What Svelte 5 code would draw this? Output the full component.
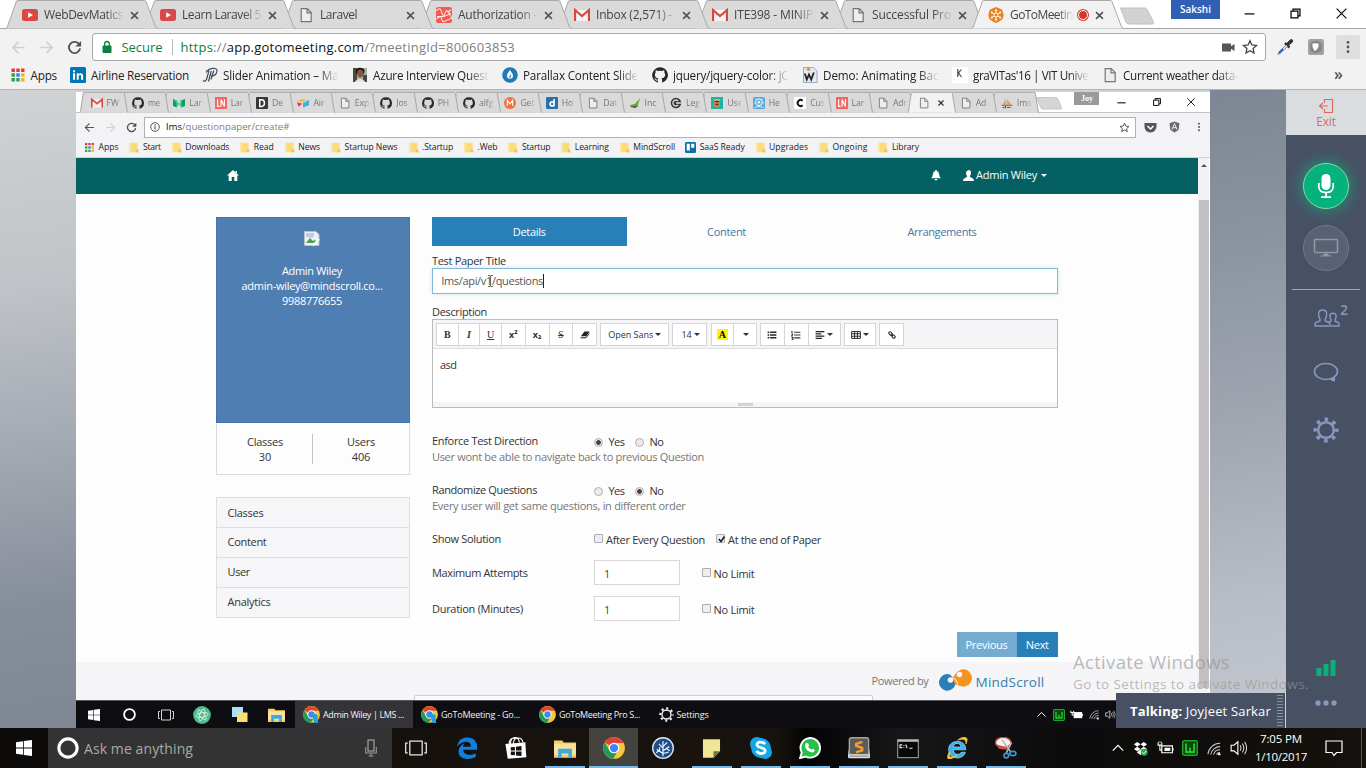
<script>
  // Spreads letters so that a label takes exactly the given width.
  function fit(node, width) {
    const natural = node.getBoundingClientRect().width;
    const count = node.textContent.length;
    if (natural && count) node.style.letterSpacing = (width - natural) / count + 'px';
  }

  const tabs = [
    { icon: 'youtube', text: 'WebDevMatics', w: 79 },
    { icon: 'youtube', text: 'Learn Laravel 5', w: 79 },
    { icon: 'page', text: 'Laravel', w: 37 },
    { icon: 'laravel', text: 'Authorization -', w: 79 },
    { icon: 'gmail', text: 'Inbox (2,571) -', w: 76 },
    { icon: 'gmail', text: 'ITE398 - MINIP', w: 79 },
    { icon: 'page', text: 'Successful Pro', w: 79 },
    { icon: 'goto', text: 'GoToMeetin', w: 63, active: true }
  ];

  const bookmarks = [
    { icon: 'linkedin', text: 'Airline Reservation', w: 98 },
    { icon: 'jp', text: 'Slider Animation – Ma', w: 115.5, cut: true },
    { icon: 'photo', text: 'Azure Interview Quest', w: 115.5, cut: true },
    { icon: 'drop', text: 'Parallax Content Slide', w: 115, cut: true },
    { icon: 'github', text: 'jquery/jquery-color: jC', w: 115.5, cut: true },
    { icon: 'worddoc', text: 'Demo: Animating Bac', w: 115.5, cut: true },
    { icon: 'kicon', text: "graVITas'16 | VIT Unive", w: 115.5, cut: true },
    { icon: 'page', text: 'Current weather data-', w: 115.5, cut: true }
  ];

  const innerTabs = [
    ['gmail', 'FW'], ['github', 'me'], ['medium', 'Lar'], ['ln', 'Lar'], ['dark', 'De'], ['airtable', 'Air'],
    ['page', 'Exp'], ['github', 'Jos'], ['github', 'PH'], ['github', 'alfg'], ['morange', 'Get'], ['dblue', 'Ho'],
    ['page', 'Dat'], ['green', 'Inc'], ['cdark', 'Leg'], ['teal', 'Use'], ['helm', 'He'], ['cwhite', 'Cus'],
    ['ln', 'Lar'], ['page', 'Adr'], ['page', ''], ['page', 'Ad'], ['pma', 'lms']
  ];

  const innerMarks = [
    ['apps', 'Apps', 20], ['note', 'Start', 18], ['note', 'Downloads', 44], ['note', 'Read', 20], ['note', 'News', 22],
    ['note', 'Startup News', 53], ['note', '.Startup', 31], ['note', '.Web', 20], ['note', 'Startup', 28.5], ['note', 'Learning', 34],
    ['note', 'MindScroll', 42], ['trello', 'SaaS Ready', 45], ['note', 'Upgrades', 39], ['note', 'Ongoing', 35], ['note', 'Library', 27]
  ];

  const launchers = [
    { icon: 'edge' }, { icon: 'store' }, { icon: 'folder', open: true }, { icon: 'chrome', open: true, active: true },
    { icon: 'tree' }, { icon: 'sticky', open: true }, { icon: 'skype', open: true }, { icon: 'whatsapp', open: true },
    { icon: 'sublime', open: true }, { icon: 'cmd', open: true }, { icon: 'ie', open: true }, { icon: 'snip', open: true }
  ];
</script>

{#snippet icon(name, size)}
  <svg class="ico" width={size} height={size} viewBox="0 0 16 16">
    {#if name === 'youtube'}
      <rect y="2" width="16" height="12" rx="2.5" fill="#d9494a" /><path d="M6.2 5.2v5.6L11 8z" fill="#fff" />
    {:else if name === 'page'}
      <path d="M3.2 1.6h6l4 4v9h-10zM9 1.8v4h4" fill="#eee" stroke="#777" stroke-width="1.2" />
    {:else if name === 'laravel'}
      <rect width="16" height="16" rx="2" fill="#f3594f" />
      <path d="M0 3.5l4-2 3.5 8 7-2.5-2.2-3 3.2-1M1 9.5l6.500 0 3-6.500 5.500 8-9 4-2.500-5.500L0 12" fill="none" stroke="#fff" stroke-width=".9" />
    {:else if name === 'gmail'}
      <path d="M1 3h14v11H1z" fill="#f4f4f4" /><path d="M1 14V3l7 6 7-6v11" fill="none" stroke="#d8493d" stroke-width="2.2" />
    {:else if name === 'goto'}
      <path d="M8 0l3 1.200 3.200 1.600 1 3.200.500 3-1.600 3.400-3 2.200L8 16l-3.200-1.400-3-2L.300 9l.500-3.200 1-3L5 1.300z" fill="#e98322" />
      <g stroke="#fff" stroke-width=".9"><path d="M8 3v10M3.600 5.500l8.800 5M3.600 10.500l8.800-5" /><circle cx="8" cy="8" r="2" fill="#e98322" /></g>
      <g fill="#fff"><circle cx="8" cy="3.200" r="1" /><circle cx="8" cy="12.800" r="1" /><circle cx="3.800" cy="5.600" r="1" /><circle cx="12.200" cy="5.600" r="1" /><circle cx="3.800" cy="10.400" r="1" /><circle cx="12.200" cy="10.400" r="1" /></g>
    {:else if name === 'apps'}
      <g fill="#e33b2e"><path d="M1.500 1.500h3.400v3.400H1.500zM6.300 1.500h3.400v3.400H6.300zM11.100 1.500h3.400v3.400h-3.400z" /></g>
      <path d="M1.500 6.300h3.400v3.400H1.500z" fill="#2f9e50" /><path d="M6.300 6.300h3.400v3.400H6.300z" fill="#3a78e7" /><path d="M11.100 6.300h3.400v3.400h-3.400z" fill="#f3b50b" />
      <path d="M1.500 11.100h3.400v3.400H1.500zM6.300 11.100h3.400v3.400H6.300z" fill="#2f9e50" /><path d="M11.100 11.100h3.400v3.400h-3.400z" fill="#f3b50b" />
    {:else if name === 'linkedin'}
      <rect width="16" height="16" rx="1.5" fill="#0077b5" /><path d="M3 6.300h2v6.500H3zM3 3.200h2v2H3zM6.700 6.300h1.900v1c1.200-1.900 4.500-1.500 4.500 1.700v3.800h-2V9.300c0-2-2.400-1.700-2.400.1v3.400h-2z" fill="#fff" />
    {:else if name === 'jp'}
      <g fill="none" stroke="#3c4b60" stroke-width="1.200"><path d="M7 3.500L4.800 11.500c-.600 2.500-2.300 3.500-3.800 2M9.300 4L6.500 14.500M4 5.500c2.500-4.500 11.500-6 11-1.500-.400 3.800-3.300 5.200-6 4.800M11.800 3.500L9 12.500M4.500 3.500L7 3.500" /></g>
    {:else if name === 'photo'}
      <path d="M1 1h14v14H1z" fill="#a9b0ac" /><path d="M1 1h4v14H1zM11 8h4v7h-4z" fill="#474840" /><path d="M4 2.500C6 0 11 0 12.500 3l-.5 4H4.500z" fill="#20140f" /><ellipse cx="8.300" cy="6.600" rx="3" ry="4" fill="#8a573f" /><path d="M3 15c1-4 9-4 10 0z" fill="#dce4f0" />
    {:else if name === 'drop'}
      <circle cx="8" cy="8" r="7.800" fill="#1d7cb6" /><path d="M8 3c1.500 2.500 3 3.800 3 5.800a3 3 0 0 1-6 0C5 6.800 6.500 5.500 8 3z" fill="#fff" /><path d="M8.300 7.500v2.700H7" stroke="#1d7cb6" fill="none" />
    {:else if name === 'github'}
      <path fill="#24292e" d="M8 .3a7.800 7.800 0 0 0-2.500 15.200c.4.100.5-.2.500-.4v-1.500c-2.200.5-2.700-.9-2.700-.9-.3-.9-.9-1.200-.9-1.200-.7-.5.1-.5.1-.5.8.1 1.200.8 1.200.8.7 1.200 1.900.9 2.300.7 0-.5.300-.9.500-1.100-1.800-.2-3.600-.9-3.600-3.900 0-.9.300-1.500.8-2.100-.1-.2-.4-1 .1-2.100 0 0 .7-.2 2.200.8a7.500 7.500 0 0 1 4 0c1.500-1 2.200-.8 2.200-.8.400 1.100.100 1.900.1 2.100.5.600.8 1.200.8 2.100 0 3-1.800 3.700-3.600 3.900.3.300.6.800.6 1.500v2.200c0 .2.100.5.500.4A7.800 7.800 0 0 0 8 .3z" />
    {:else if name === 'worddoc'}
      <path d="M1.500 .5h10l3.500 3.500v11.500H1.500z" fill="#e3e9f3" stroke="#8fa3c4" stroke-width=".9" /><circle cx="6.500" cy="2.300" r="1.700" fill="#ee8b39" /><path d="M2.800 6.500l2 6L7 7.500l2.200 5 2.600-7" fill="none" stroke="#222" stroke-width="1.800" />
    {:else if name === 'kicon'}
      <path d="M0 0h16v16H0z" fill="#fff" /><path d="M5.800 2v8M9.300 2.500L6.500 6l3 4" fill="none" stroke="#444" stroke-width="1.200" />
    {:else if name === 'medium'}
      <path d="M0 2.500l5 2V14l-5-2zM11 4.500l5-2v9.500l-5 2z" fill="#0c9f63" /><path d="M0 2.500L5 4.500l6 9.500V9L8 4.500l3 0L5 14V8z" fill="#29d68c" />
    {:else if name === 'ln'}
      <path d="M0 0h16v16H0z" fill="#f2675f" /><path d="M3.500 3v9.500H6M8 13V3.500l4.500 9V3" fill="none" stroke="#fff" stroke-width="1.500" />
    {:else if name === 'dark'}
      <rect width="16" height="16" rx="1" fill="#38383c" /><path d="M5 3.500v9h2.500c5 0 5-9 0-9z" fill="none" stroke="#fff" stroke-width="2" />
    {:else if name === 'airtable'}
      <path d="M0 5l8-2 5 1-7 3z" fill="#f7b62d" /><path d="M0 7l7 2-5 4z" fill="#e23b5c" /><path d="M8 8l8-4v7l-8 3z" fill="#35b4e8" />
    {:else if name === 'morange'}
      <circle cx="8" cy="8" r="8" fill="#f0723c" /><path d="M4.500 11.500v-7L8 9l3.500-4.500v7" fill="none" stroke="#fff" stroke-width="1.500" />
    {:else if name === 'dblue'}
      <rect width="16" height="16" rx="1.500" fill="#2571a8" /><path d="M10.700 2.500v10M10.500 8a2.700 2.700 0 1 0 0 2.500" fill="none" stroke="#fff" stroke-width="2.200" />
    {:else if name === 'green'}
      <path d="M1 11L8 9l7-8-3.500 10.500L8 14H3z" fill="#68ab37" /><path d="M1 12l6 1 6-2-5 3.500z" fill="#333" />
    {:else if name === 'cdark'}
      <circle cx="8" cy="8" r="7" fill="#333438" /><path d="M15 8H8M11 5.500a4 4 0 1 0 0 5" stroke="#dcdcde" stroke-width="1.800" fill="none" />
    {:else if name === 'teal'}
      <path d="M0 0h16v16H0z" fill="#20b2a8" /><path d="M4 3h8v10H4z" fill="#c98b4a" /><path d="M5 5h6v2H5zM6 9h4v2H6z" fill="#553422" /><path d="M4 3l2 2 2-2 2 2 2-2" stroke="#eee" fill="none" />
    {:else if name === 'helm'}
      <rect width="16" height="16" rx="2" fill="#58a9dc" /><circle cx="8" cy="7" r="4.500" fill="none" stroke="#fff" stroke-width="1.300" /><circle cx="8" cy="7" r="1.800" fill="#fff" /><path d="M2 14q6-3 12 0M3 2l2 2M13 2l-2 2M1.500 8H3M13 8h1.500" fill="none" stroke="#fff" />
    {:else if name === 'cwhite'}
      <path d="M0 0h16v16H0z" fill="#fff" /><path d="M11.500 5a4 4 0 1 0 0 6" fill="none" stroke="#111" stroke-width="2.500" />
    {:else if name === 'pma'}
      <path d="M2 10L7 2v8zM8 10V3l6 7z" fill="#f4a337" /><path d="M1 11h14M2 14h3M6 12v3M8 14h5" stroke="#4a5b9b" stroke-width="1.500" />
    {:else if name === 'note'}
      <path d="M2 1h12v14H2z" fill="#fbdc7b" /><path d="M11 11h4v4h-4z" fill="#efc44f" /><path d="M2 1h2v14H2z" fill="#fce7a0" />
    {:else if name === 'trello'}
      <rect width="16" height="16" rx="2" fill="#0b6fa8" /><path d="M2.500 2.500h4.500v10H2.500zM9 2.500h4.500v6H9z" fill="#fff" />
    {:else if name === 'edge'}
      <path d="M.8 7C1.600 2.300 4.600.4 8.300.4c4.500 0 7.100 3 7.100 7.200v1.700H5.200c.2 4.100 5.800 4.600 9.100 2.500v2.800C8.800 17.500.7 15.900 2 9.400 2.500 7 4.500 5.300 6.300 4.800 5.500 5.500 5.200 6.300 5.100 7h5.700C11.200 2 4 2.600.8 7z" fill="#0f7fe0" />
    {:else if name === 'store'}
      <path d="M.3 5l14.500-1.200.7 10.900-13.500 1.100z" fill="#fff" /><path d="M4 5c0-5.500 5.500-6.500 6.500-1M6 5c.5-6 6.500-5 7-1M3 5C3 1 6 0 8 1.500" fill="none" stroke="#fff" stroke-width=".8" /><path d="M4.200 7.500l3-.3v2.600h-3zM8 7.100l4-.500v3.200H8zM4.200 10.600h3v2.700l-3-.3zM8 10.600h4v3.300l-4-.500z" fill="#111" />
    {:else if name === 'folder'}
      <path d="M0 2.500h6l1 1.500h9v11H0z" fill="#f6cd68" /><path d="M0 5h16v8H0z" fill="#fbe29a" /><path d="M3 8.500h10V15h-2.500v-3h-5v3H3z" fill="#38abe2" />
    {:else if name === 'chrome' || name === 'chromeuser'}
      <circle cx="8" cy="8" r="7.900" fill="#f5c938" /><path d="M8 8L1.200 4A7.900 7.900 0 0 1 15 4.400H8z" fill="#dc4437" /><path d="M1.200 4A7.900 7.900 0 0 0 7.500 15.900L11 9.500 8 8 4.700 9.500z" fill="#229a59" /><circle cx="8" cy="8" r="3.900" fill="#fff" /><circle cx="8" cy="8" r="3" fill="#4286f1" />
      {#if name === 'chromeuser'}<circle cx="11.500" cy="10" r="2.400" fill="#269ee6" /><path d="M9.500 11.500l4-1 1 6h-3.500z" fill="#269ee6" />{/if}
    {:else if name === 'tree'}
      <circle cx="8" cy="8" r="7.500" fill="#1e4d88" stroke="#dce6f0" stroke-width="1" /><path d="M8 14V3M8 12L3.500 9M8 10l4.500-3M8 8L5 5M8 7l3-3M5.500 10.300V7.500M10.500 8.500L13 10M5 10l-2 1.500M8 12l4-1" fill="none" stroke="#e7eff7" stroke-width=".9" />
    {:else if name === 'sticky'}
      <path d="M1.500 1h13v9l-5 5h-8z" fill="#f1e596" /><path d="M9.500 15v-5h5z" fill="#77714b" />
    {:else if name === 'skype'}
      <circle cx="5" cy="5" r="5" fill="#16a6e7" /><circle cx="11" cy="11" r="5" fill="#16a6e7" /><circle cx="8" cy="8" r="7.200" fill="#16a6e7" /><path d="M11 5.200C9 2.700 4.500 3.500 5.200 6c.6 2.300 6 1.200 5.800 4.100-.2 2.500-5 2.600-6.200 0" fill="none" stroke="#fff" stroke-width="2" />
    {:else if name === 'whatsapp'}
      <path d="M.8 15.300l1.200-4A7.100 7.100 0 1 1 5 14.200z" fill="#27c04b" stroke="#fff" stroke-width="1.400" /><path d="M5 4.300l1.600.2.700 1.700-.7 1 2.300 2 1.100-.6 1.500 1c-.4 1.900-2.200 1.900-4 1C5.300 9.500 3.400 6.700 5 4.300z" fill="#fff" />
    {:else if name === 'sublime'}
      <rect x="1" y=".5" width="14" height="12.500" rx="1.500" fill="#5b5b58" stroke="#a5a5a0" /><path d="M.5 8L0 12v2.500q0 1 1 1h14q1 0 1-1V12l-.5-4v4.500H.5z" fill="#ddd" /><path d="M1 13.500h14v.8H1z" fill="#888" /><path d="M10.500 3.500L6 5v1.500l4.300 1.500v1.700L5.800 11.200" fill="none" stroke="#f59b31" stroke-width="1.800" />
    {:else if name === 'cmd'}
      <rect x=".5" y="2" width="15" height="13" fill="#080808" stroke="#999" stroke-width=".8" /><path d="M.5 2h15v1.500H.5z" fill="#bbb" /><path d="M3.800 5.700H2.200v2h1.600M5 6v.5M5 7.500v.5M6.300 5.500l1 2.500M9 8.200h2.300" stroke="#eee" fill="none" stroke-width=".8" />
    {:else if name === 'ie'}
      <path d="M14.300 9.300H5.300c.2 4 5 3.900 5.800 1.800h3C12.500 17 2 17 1.900 8.800 2 1.500 14.800 1 14.300 9.300zM5.300 7.300h5.600c-.2-3.500-5.200-3.500-5.600 0z" fill="#33b4ef" stroke="#aae2fa" stroke-width=".5" /><path d="M2.300 11C-1.500 19 5 15.500 8 13.500 3.800 14.800 1.500 15.500 3 12zM8.500 2.200c5-3.500 8.500-2.500 6 2.800C15 1.500 12.500 1 8.500 2.200z" fill="#f4c832" stroke="#f4c832" stroke-width=".6" />
    {:else if name === 'snip'}
      <ellipse cx="6" cy="4" rx="5.700" ry="3.700" fill="#f5f4f2" stroke="#c43b3b" /><path d="M1 5.500l2 3.200 6 .5-1-2z" fill="#d54b42" /><path d="M5 2l6.500 9M12 4L8 12" stroke="#bbb" stroke-width="1.200" /><circle cx="8.200" cy="13.500" r="1.700" fill="none" stroke="#3e96d2" stroke-width="1.200" /><ellipse cx="13" cy="12" rx="2.200" ry="1.500" fill="none" stroke="#3e96d2" stroke-width="1.200" />
    {:else if name === 'win'}
      <path d="M0 2.200l7-1v6.300H0zM7.800 1l8.200-1v7.500H7.800zM0 8.400h7v6.300l-7-1zM7.800 8.400H16V16l-8.200-1.100z" fill="#fff" />
    {:else if name === 'taskview'}
      <path d="M3.500 3h9v10h-9zM2 4.500H.5v7H2M14 4.500h1.500v7H14" fill="none" stroke="#e9e9e9" stroke-width=".9" />
    {:else if name === 'atom'}
      <circle cx="8" cy="8" r="7.900" fill="#4dbb8a" /><g fill="none" stroke="#dff5e9" stroke-width=".7"><ellipse cx="8" cy="8" rx="2" ry="5.500" transform="rotate(20 8 8)" /><ellipse cx="8" cy="8" rx="2" ry="5.500" transform="rotate(80 8 8)" /><ellipse cx="8" cy="8" rx="2" ry="5.500" transform="rotate(140 8 8)" /></g>
    {:else if name === 'squares'}
      <path d="M0 0h11v10H0z" fill="#a9dff7" /><path d="M5 5.500h10.500V15H5z" fill="#fade74" />
    {:else if name === 'gear'}
      <circle cx="8" cy="8" r="4.800" fill="none" stroke="currentColor" stroke-width="1.500" /><circle cx="8" cy="8" r="6.600" fill="none" stroke="currentColor" stroke-width="2.300" stroke-dasharray="2.200 2.984" stroke-dashoffset="1.100" />
    {:else if name === 'wbox'}
      <rect x=".7" y=".7" width="14.600" height="14.600" rx="1.500" fill="#054a0b" stroke="#1fa52b" stroke-width="1.400" /><path d="M4 3.500V12h8V3.500M8 7.500v4" fill="none" stroke="#22c52f" stroke-width="1.900" />
    {:else if name === 'battery'}
      <path d="M4.500 5.500h10v6.500h-10zM15 7.500v2.500" fill="none" stroke="#fff" stroke-width="1.100" /><path d="M7 7.300h5.500v3H7z" fill="#fff" /><path d="M1 2.500v2.300h3.500V2.500M2.700 5v4.500h2M1.800 1.500v1M3.700 1.500v1" stroke="#fff" fill="none" />
    {:else if name === 'batfull'}
      <path d="M4.500 5h10.500v7.500H4.500z" fill="#fff" /><path d="M15 7.500h1v2.500h-1z" fill="#fff" /><path d="M1 3.500v2h3.500v-2M2.700 5.500v3h2" stroke="#fff" stroke-width="1.300" fill="none" />
    {:else if name === 'wifi'}
      <g fill="none" stroke="#ccc" stroke-width="1.100"><path d="M1 14A13 13 0 0 1 14 2.500M4 14.500A10 10 0 0 1 14 6M7 14.500A7 7 0 0 1 14 9.300M10 14.500a4 4 0 0 1 4-2.300" /></g><circle cx="13" cy="14" r="1.300" fill="#fff" />
    {:else if name === 'volume'}
      <path d="M1 5.500h2.500L7 2.500v11l-3.500-3H1z" fill="none" stroke="#fff" /><path d="M9 5.500q1.500 2.500 0 5M11 4q2.500 4 0 8M13 2.500q3.500 5.500 0 11" fill="none" stroke="#ddd" stroke-width=".9" />
    {:else if name === 'chevron'}
      <path d="M2 11l6-6 6 6" fill="none" stroke="#fff" stroke-width="1.400" />
    {:else if name === 'dropbox'}
      <path d="M4.500 1L8 3.500 4.500 6 1 3.500zM11.500 1L15 3.500 11.500 6 8 3.500zM4.500 6L8 8.500 4.500 11 1 8.500zM11.500 6L15 8.500 11.500 11 8 8.500zM4 12l4-3 4 3-4 3z" fill="#fff" /><circle cx="12" cy="12" r="3.700" fill="#2aab4d" /><path d="M10 12l1.500 1.500L14 10.500" fill="none" stroke="#fff" />
    {:else if name === 'star'}
      <path d="M8 1.700l1.900 4.200 4.600.5-3.400 3.100.9 4.500L8 11.700 4 14l.9-4.500L1.500 6.400l4.600-.5z" fill="none" stroke="#444" stroke-width="1.300" />
    {:else if name === 'back'}
      <path d="M14.500 8H2M8 2L2 8l6 6" fill="none" stroke="currentColor" stroke-width="1.700" />
    {:else if name === 'forward'}
      <path d="M1.500 8H14M8 2l6 6-6 6" fill="none" stroke="currentColor" stroke-width="1.700" />
    {:else if name === 'reload'}
      <path d="M13.300 5A6 6 0 1 0 14 9" fill="none" stroke="#505050" stroke-width="2" /><path d="M15 1v6H9z" fill="#505050" />
    {:else if name === 'close'}
      <path d="M3 3l10 10M13 3L3 13" stroke="currentColor" stroke-width="2.400" />
    {:else if name === 'min'}
      <path d="M2 8.500h12" stroke="#000" stroke-width="1.500" />
    {:else if name === 'restore'}
      <path d="M2.500 5h8.500v8.500H2.500zM5 5V2.500h8.500V11H11" fill="none" stroke="#000" stroke-width="1.500" />
    {:else if name === 'shut'}
      <path d="M2 2l12 12M14 2L2 14" stroke="#000" stroke-width="1.400" />
    {:else if name === 'dots'}
      <g fill="#555"><circle cx="8" cy="2.700" r="1.600" /><circle cx="8" cy="8" r="1.600" /><circle cx="8" cy="13.300" r="1.600" /></g>
    {:else if name === 'list'}
      <path d="M1 3.500h2.500M1 8h2.500M1 12.500h2.500M5 3.500h10M5 8h10M5 12.500h10" stroke="#222" stroke-width="2.400" />
    {:else if name === 'olist'}
      <path d="M1.500 1v4M1 7h1.500l-1.500 2.500h2M1 12h2v3H1M5 3.500h10M5 8h10M5 12.500h10" fill="none" stroke="#333" stroke-width="1.800" />
    {:else if name === 'align'}
      <path d="M1 2.500h14M1 6.200h9M1 9.800h14M1 13.500h10" stroke="#222" stroke-width="2" />
    {:else if name === 'table'}
      <path d="M1 2.500h14v11H1zM1 6h14M1 10h14M5.700 2.500v11M10.300 2.500v11" fill="none" stroke="#222" stroke-width="1.500" />
    {:else if name === 'link'}
      <g fill="none" stroke="#222" stroke-width="2" transform="rotate(45 8 8)"><rect x="0" y="5.500" width="7.500" height="5" rx="2.500" /><rect x="8.500" y="5.500" width="7.500" height="5" rx="2.500" /><path d="M5 8h6" /></g>
    {:else if name === 'eraser'}
      <path d="M7 2.500h8.500L10 10H1.500z" fill="#222" /><path d="M1 12.500h8.500l5.500-7" fill="none" stroke="#222" stroke-width="1.600" />
    {/if}
  </svg>
{/snippet}

{#snippet tabShape(active)}
  <svg class="shape" viewBox="0 0 152 29" preserveAspectRatio="none">
    <path d="M0 28.500C1 28 1.500 26 2 25L10.500 1Q11 .5 12 .5H138.500Q139.500 .5 140 1L149 25Q150 28.500 152 28.500" fill={active ? '#f2f2f2' : '#dadada'} stroke="#a9a9a9" vector-effect="non-scaling-stroke" />
  </svg>
{/snippet}

{#snippet ring(size)}
  <svg class="ico" width={size} height={size} viewBox="0 0 20 20"><circle cx="10" cy="10" r="8.300" fill="none" stroke="#fff" stroke-width="2.800" /></svg>
{/snippet}

<div class="screen">
  <header class="browser">
    <div class="strip">
      {#each tabs as t, i}
        <div class="tab" class:active={t.active} style:z-index={t.active ? 20 : 10 - i}>
          {@render tabShape(t.active)}
          <div class="tabin">
            {@render icon(t.icon, 16)}
            <div class="tabtext" class:short={t.active}><span class="t" use:fit={t.w}>{t.text}</span></div>
            {#if t.active}<i class="rec"></i>{/if}
            <span class="x">{@render icon('close', 11)}</span>
          </div>
        </div>
      {/each}
      <svg class="newtab" width="34" height="18" viewBox="0 0 34 18"><path d="M.5 1h24q2 0 3 2l6 12q.5 2-1 2H9q-2 0-3-2z" fill="#d2d2d2" stroke="#c0c0c0" /></svg>
      <div class="profile"><span class="t" use:fit={31}>Sakshi</span></div>
      <div class="wctl">{@render icon('min', 13)}{@render icon('restore', 13)}{@render icon('shut', 13)}</div>
    </div>
    <div class="toolbar">
      <span class="dim">{@render icon('back', 15)}</span>
      <span class="dim">{@render icon('forward', 15)}</span>
      {@render icon('reload', 15)}
      <div class="omni">
        <svg width="10" height="14" viewBox="0 0 10 14"><path d="M1 6h8v6.500H1z" fill="#0b8043" stroke="#0b8043" /><path d="M2.700 6V3.800a2.300 2.300 0 0 1 4.600 0V6" fill="none" stroke="#0b8043" stroke-width="1.300" /></svg>
        <span class="t secure" use:fit={41}>Secure</span>
        <i class="bar"></i>
        <span class="t" use:fit={334.5}><b class="g">https</b><b class="l">://</b>app.gotomeeting.com<b class="l">/?meetingId=800603853</b></span>
        <span class="grow"></span>
        <svg width="13" height="9" viewBox="0 0 13 9"><path d="M0 .5h9v2.700L12.500 1v7L9 5.800v2.700H0z" fill="#555" /></svg>
        {@render icon('star', 16)}
      </div>
      <svg class="picker" width="16" height="16" viewBox="0 0 16 16"><path d="M9.500 5l2-2.500Q14-.5 15.500 1T13 5l-2 2z" fill="#333" stroke="#333" /><path d="M8 4l4.500 4.500" stroke="#333" stroke-width="2.500" /><path d="M9 6L2 13l-1 2.500L3.500 14l7-6.500" fill="#dfe6f4" stroke="#888" /><path d="M6 10l-4 4" stroke="#2f5fd6" stroke-width="2" /></svg>
      <svg class="shield" width="16" height="16" viewBox="0 0 16 16"><rect width="16" height="16" rx="2" fill="#a2a2a2" /><rect x="2" y="2" width="12" height="12" rx="5" fill="#858585" /><path d="M4.500 4.500q3-.3 6 0 .8 4.500-3.500 7.500Q4 9 4.500 4.500z" fill="#fff" /></svg>
      <div class="menu">{@render icon('dots', 14)}</div>
    </div>
    <nav class="marks">
      <div class="mark">{@render icon('apps', 16)}<span class="t" use:fit={26.5}>Apps</span></div>
      {#each bookmarks as b}
        <div class="mark">{@render icon(b.icon, 16)}<div class="mt" class:cut={b.cut}><span class="t" use:fit={b.w}>{b.text}</span></div></div>
      {/each}
      <span class="more">»</span>
    </nav>
  </header>

  <main class="meeting">
    <div class="gutter left"></div>
    <section class="shared">
      <div class="istrip">
        {#each innerTabs as [ic, label], i}
          <div class="itab" style:z-index={i === 20 ? 40 : 30 - i}>
            {@render tabShape(i === 20)}
            <div class="itin">{@render icon(ic, 12)}{#if label}<span class="t">{label}</span>{:else}<span class="ix">{@render icon('close', 8)}</span>{/if}</div>
          </div>
        {/each}
        <svg class="inew" width="26" height="13" viewBox="0 0 26 13"><path d="M.5.5h19q1.500 0 2 1l4 9q.5 1.500-1 1.500H7q-1.500 0-2-1z" fill="#d5d4d6" stroke="#c6c5c7" /></svg>
        <div class="joy">Joy</div>
        <div class="iwctl">{@render icon('min', 11)}{@render icon('restore', 10)}{@render icon('shut', 10)}</div>
      </div>
      <div class="itool">
        <span class="iback">{@render icon('back', 11)}</span><span class="dim">{@render icon('forward', 11)}</span>{@render icon('reload', 11)}
        <div class="iomni">
          <svg width="10" height="10" viewBox="0 0 10 10"><circle cx="5" cy="5" r="4.300" fill="none" stroke="#555" /><path d="M5 4.300v3.200M5 2.300v1.200" stroke="#555" stroke-width="1.200" /></svg>
          <span class="t" use:fit={123.5}>lms<b class="l">/questionpaper/create#</b></span>
          <span class="grow"></span>{@render icon('star', 11)}
        </div>
        <svg class="pocket" width="13" height="11" viewBox="0 0 13 11"><path d="M.5 1h12v4q-1 5-6 5.500Q1 10 .5 5z" fill="#55565b" /><path d="M3.500 4l3 3 3-3" fill="none" stroke="#fff" stroke-width="1.500" /></svg>
        <svg class="ang" width="11" height="12" viewBox="0 0 11 12"><path d="M5.500.5l5 1.800-.9 6.700-4.100 2.500L1.400 9 .5 2.300z" fill="#6c6c70" /><path d="M3 8.500L5.500 2.500 8 8.500M4 6.700h3" fill="none" stroke="#eee" /></svg>
        {@render icon('dots', 10)}
      </div>
      <div class="imarks">
        {#each innerMarks as [ic, label, w]}
          <div class="imark">{@render icon(ic, 11)}<span class="t" use:fit={w}>{label}</span></div>
        {/each}
      </div>

      <div class="view">
        <div class="site">
          <div class="topnav">
            <svg width="12" height="11" viewBox="0 0 12 11"><path d="M6 0l6 5.500h-1.700V11H7.300V7H4.700v4h-3V5.500H0z" fill="#fff" /><path d="M8.500 1H10v2.500L8.500 2z" fill="#fff" /></svg>
            <span class="grow"></span>
            <svg width="10" height="11" viewBox="0 0 10 11"><path d="M5 0q1 0 1 1 2 .7 2.200 3.500Q8.400 7 10 8.300H0Q1.600 7 1.800 4.500 2 1.700 4 1q0-1 1-1zM3.500 9h3Q6 10.500 5 10.500T3.500 9z" fill="#fff" /></svg>
            <div class="who">
              <svg width="11" height="11" viewBox="0 0 11 11"><path d="M5.500 0Q8.200 0 8 3T6.800 6.300Q7 7.500 9.500 8.200 11 8.800 11 11H0Q0 8.800 1.500 8.200 4 7.500 4.200 6.300 3 5 3 3T5.500 0z" fill="#fff" /></svg>
              <span class="t" use:fit={61}>Admin Wiley</span><i class="caret"></i>
            </div>
          </div>
          <div class="content">
            <aside>
              <div class="card">
                <svg width="16" height="15" viewBox="0 0 16 15"><path d="M.5.5H12l3 3v11H.5z" fill="#eef1f6" stroke="#b9bdc4" /><path d="M2 12l4-5 3 3 2-1.500 2 3.500z" fill="#4fa24c" /><path d="M2 2h8v3L8 7 2 6z" fill="#b9cdf0" /><path d="M15 8L9 14.500" stroke="#fff" stroke-width="2" /></svg>
                <span class="t name" use:fit={60}>Admin Wiley</span>
                <span class="t" use:fit={141}>admin-wiley@mindscroll.co...</span>
                <span class="t" use:fit={60}>9988776655</span>
              </div>
              <div class="stats">
                <div><span class="t" use:fit={36}>Classes</span><span class="t" use:fit={12.500}>30</span></div>
                <div><span class="t" use:fit={28}>Users</span><span class="t" use:fit={18.500}>406</span></div>
              </div>
              <div class="list">
                <div><span class="t" use:fit={36}>Classes</span></div>
                <div><span class="t" use:fit={39}>Content</span></div>
                <div><span class="t" use:fit={22.500}>User</span></div>
                <div><span class="t" use:fit={43}>Analytics</span></div>
              </div>
            </aside>
            <div class="form">
              <div class="steps">
                <div class="on"><span class="t" use:fit={33}>Details</span></div>
                <div><span class="t" use:fit={39}>Content</span></div>
                <div><span class="t" use:fit={69}>Arrangements</span></div>
              </div>
              <div class="lab a"><span class="t" use:fit={74}>Test Paper Title</span></div>
              <div class="title">
                <span class="t" use:fit={101.5}>lms/api/v1/questions</span><i class="cursor"></i>
                <svg class="beam" width="7" height="12" viewBox="0 0 7 12"><path d="M1 .5h2l.5.5.5-.5h2M3.500 1v10M1 11.500h2l.5-.5.500.5h2" fill="none" stroke="#555" stroke-width=".9" /></svg>
              </div>
              <div class="lab b"><span class="t" use:fit={55}>Description</span></div>
              <div class="editor">
                <div class="tools">
                  <div class="grp g1"><b>B</b><b><em>I</em></b><b class="u">U</b><b>x²</b><b>x₂</b><b class="s">S</b><b>{@render icon('eraser', 10)}</b></div>
                  <div class="grp wide"><span class="t" use:fit={45}>Open Sans</span><i class="caret"></i></div>
                  <div class="grp size"><span class="t" use:fit={10.500}>14</span><i class="caret"></i></div>
                  <div class="grp g2"><b><mark>A</mark></b><b><i class="caret"></i></b></div>
                  <div class="grp g3"><b>{@render icon('list', 10)}</b><b>{@render icon('olist', 10)}</b><b>{@render icon('align', 10)}<i class="caret"></i></b></div>
                  <div class="grp g4"><b>{@render icon('table', 10)}<i class="caret"></i></b></div>
                  <div class="grp g5"><b>{@render icon('link', 8)}</b></div>
                </div>
                <div class="area"><span class="t" use:fit={16.500}>asd</span></div>
                <div class="grip"><i></i></div>
              </div>
              <div class="row r1"><div class="rl"><span class="t" use:fit={106}>Enforce Test Direction</span></div>
                <i class="radio on"></i><span class="t yes" use:fit={16}>Yes</span><i class="radio"></i><span class="t no" use:fit={14}>No</span></div>
              <div class="hint"><span class="t" use:fit={272}>User wont be able to navigate back to previous Question</span></div>
              <div class="row r2"><div class="rl"><span class="t" use:fit={105}>Randomize Questions</span></div>
                <i class="radio"></i><span class="t yes" use:fit={16}>Yes</span><i class="radio on"></i><span class="t no" use:fit={14}>No</span></div>
              <div class="hint"><span class="t" use:fit={253.500}>Every user will get same questions, in different order</span></div>
              <div class="row r3"><div class="rl"><span class="t" use:fit={69}>Show Solution</span></div>
                <i class="check"></i><span class="t" use:fit={99}>After Every Question</span>
                <i class="check second"><svg width="9" height="9" viewBox="0 0 9 9"><path d="M1.800 4L4 6.500 7.500 1.500" fill="none" stroke="#222" stroke-width="1.700" /></svg></i><span class="t" use:fit={93}>At the end of Paper</span></div>
              <div class="row r4"><div class="rl"><span class="t" use:fit={95.500}>Maximum Attempts</span></div><div class="num">1</div><i class="check"></i><span class="t" use:fit={41}>No Limit</span></div>
              <div class="row r5"><div class="rl"><span class="t" use:fit={91}>Duration (Minutes)</span></div><div class="num">1</div><i class="check"></i><span class="t" use:fit={41}>No Limit</span></div>
              <div class="btns"><div class="prev"><span class="t" use:fit={42}>Previous</span></div><div class="next"><span class="t" use:fit={23}>Next</span></div></div>
            </div>
          </div>
          <footer>
            <span class="t pow" use:fit={57}>Powered by</span>
            <svg width="36" height="24" viewBox="0 0 36 24"><path d="M13 5.500A8.300 8.300 0 1 0 18.500 15Q19.500 10.500 15.500 8.500z" fill="#2980b9" /><circle cx="13.500" cy="11" r="2.800" fill="#f6f5f7" /><path d="M18.500 5A8.700 8.700 0 1 1 22 16.500Q17 16.500 15.500 8.500z" fill="#f7941e" /><circle cx="22.500" cy="5.500" r="2.700" fill="#f6f5f7" /><path d="M15.500 9q4.500 1 5 6.500" fill="none" stroke="#fff" /></svg>
            <span class="t brand" use:fit={69}>MindScroll</span>
            <div class="popup"></div>
          </footer>
        </div>
        <div class="scroll"><i class="arrow"></i><div class="thumb"></div></div>
      </div>

      <div class="itask">
        <div class="cell">{@render icon('win', 12)}</div>
        <div class="cell">{@render ring(13)}</div>
        <div class="cell">{@render icon('taskview', 16)}</div>
        <div class="cell">{@render icon('atom', 18)}</div>
        <div class="cell">{@render icon('squares', 16)}</div>
        <div class="cell">{@render icon('folder', 17)}</div>
        <div class="task cur">{@render icon('chromeuser', 17)}<span class="t" use:fit={81}>Admin Wiley | LMS ...</span></div>
        <div class="task">{@render icon('chromeuser', 17)}<span class="t" use:fit={79}>GoToMeeting - Go...</span></div>
        <div class="task">{@render icon('chrome', 17)}<span class="t" use:fit={81}>GoToMeeting Pro S...</span></div>
        <div class="task set">{@render icon('gear', 15)}<span class="t" use:fit={32}>Settings</span></div>
        <span class="grow"></span>
        <div class="itray">{@render icon('chevron', 11)}{@render icon('wbox', 12)}{@render icon('batfull', 13)}{@render icon('wifi', 11)}{@render icon('volume', 11)}</div>
      </div>
    </section>
    <div class="gutter right"></div>

    <aside class="panel">
      <div class="exit">
        <svg width="16" height="16" viewBox="0 0 16 16"><path d="M6.500 5V1.500h8v13h-8V11M1.500 8H10M5 5L1.500 8 5 11" fill="none" stroke="#e0695f" stroke-width="1.200" /></svg>
        <span class="t" use:fit={19.500}>Exit</span>
      </div>
      <div class="round mic"><svg width="18" height="26" viewBox="0 0 18 26"><rect x="4.500" y="1" width="9" height="16" rx="4.500" fill="#fff" /><path d="M1.800 10v3.500Q2 19.500 9 19.500t7.200-6V10M9 19.500V24M4 24.200h10" fill="none" stroke="#fff" stroke-width="1.700" /></svg></div>
      <div class="round mon"><svg width="26" height="20" viewBox="0 0 26 20"><rect x="1.500" y="1.500" width="23" height="13" rx="1" fill="none" stroke="#8f98a5" stroke-width="1.600" /><path d="M11 15.500h4l1 2h2.500v1h-11v-1H10z" fill="#8f98a5" /></svg></div>
      <hr />
      <div class="people"><svg width="26" height="18" viewBox="0 0 26 18"><path d="M15 17H1v-1.800q.3-2 5-3.200V10.300Q4.300 8 4.600 4.500 5 1 8.700 1t4 3.500Q13 8 11.200 10.300V12q3.600.8 4.800 2.500M14.500 13q2-.5 2.500-1v-1.500q-1.300-1.700-1.200-3.500.2-2.700 3.200-2.700t3.200 2.700q.1 1.800-1.200 3.500V12.300q4 .8 4 2.900V17H16v-2.500" fill="none" stroke="#8698bd" stroke-width="1.400" /></svg><span class="count">2</span></div>
      <div class="chat"><svg width="26" height="21" viewBox="0 0 26 21"><ellipse cx="13" cy="9.500" rx="11.500" ry="8" fill="none" stroke="#8698bd" stroke-width="1.600" /><path d="M16.500 17.200l5.500-3.200v5.500q-3 0-5.500-2.300z" fill="#8698bd" /></svg></div>
      <div class="cog">{@render icon('gear', 26)}</div>
      <span class="grow"></span>
      <svg class="bars" width="20" height="16" viewBox="0 0 20 16"><path d="M.5 8h5v8h-5zM7.500 4h5v12h-5zM14.500 0h5v16h-5z" fill="#0cae7a" /></svg>
      <svg class="more3" width="22" height="6" viewBox="0 0 22 6"><g fill="#8698bd"><circle cx="3" cy="3" r="2.700" /><circle cx="11" cy="3" r="2.700" /><circle cx="19" cy="3" r="2.700" /></g></svg>
    </aside>

    <div class="talk"><span class="t" use:fit={141}><strong>Talking:</strong> Joyjeet Sarkar</span><i></i></div>
    <div class="mark-os"><div class="w1"><span class="t" use:fit={157}>Activate Windows</span></div><div class="w2"><span class="t" use:fit={236}>Go to Settings to activate Windows.</span></div></div>
  </main>

  <div class="taskbar">
    <div class="start">{@render icon('win', 16)}</div>
    <div class="search">{@render ring(22)}<span class="t" use:fit={109}>Ask me anything</span><span class="grow"></span>
      <svg width="12" height="18" viewBox="0 0 12 18"><rect x="3" y="1" width="6" height="11" fill="none" stroke="#aaa" stroke-width="1.100" /><path d="M.7 8v6H11.300V8M6 14v3M3.500 17h5" fill="none" stroke="#999" stroke-width="1.100" /></svg>
    </div>
    <div class="tv">{@render icon('taskview', 22)}</div>
    {#each launchers as l}
      <div class="launch" class:open={l.open} class:active={l.active}>{@render icon(l.icon, l.icon === 'sticky' ? 21 : 22)}</div>
    {/each}
    <span class="grow"></span>
    <div class="tray">{@render icon('chevron', 14)}{@render icon('dropbox', 15)}{@render icon('battery', 17)}{@render icon('wbox', 16)}{@render icon('wifi', 15)}{@render icon('volume', 18)}</div>
    <div class="clock"><span class="t" use:fit={42}>7:05 PM</span><span class="t" use:fit={52}>1/10/2017</span></div>
    <svg class="notif" width="18" height="17" viewBox="0 0 18 17"><path d="M1 1h16v11.500h-5.500L9 15.500 7 12.500H1z" fill="none" stroke="#fff" stroke-width="1.200" /></svg>
    <i class="edge"></i>
  </div>
</div>

<style>
  :global(body) { margin: 0; overflow: hidden; }
  .screen { width: 1366px; height: 768px; display: flex; flex-direction: column; font: 12px/1 "Open Sans", "Noto Sans", sans-serif; overflow: hidden; color: #222; }
  .screen :global(*) { box-sizing: border-box; }
  .t { display: inline-block; white-space: nowrap; flex: none; line-height: 16px; }
  .t b { font-weight: 400; }
  b.l { color: #808080; }
  b.g { color: #0b8043; }
  .ico { display: block; flex: none; }
  svg { flex: none; }
  .grow { flex: 1; }

  .browser { height: 90px; background: #f2f2f2; border-bottom: 1px solid #b4b4b4; flex: none; }
  .strip { height: 29px; background: #fff; display: flex; padding-left: 6px; box-shadow: inset 0 -1px #a9a9a9; }
  .tab { width: 138px; height: 29px; position: relative; flex: none; }
  .shape { position: absolute; left: 0; top: 0; width: 110%; height: 100%; overflow: visible; }
  .tabin { position: relative; display: flex; align-items: center; height: 30px; padding-left: 16px; }
  .tabtext { width: 80.5px; margin-left: 6px; overflow: hidden; font-size: 12px; color: #444; -webkit-mask: linear-gradient(90deg, #000 75%, transparent); mask: linear-gradient(90deg, #000 75%, transparent); }
  .tabtext.short { width: 64px; }
  .rec { width: 10px; height: 10px; border-radius: 50%; background: #d43a2c; border: 1px solid #fff; box-shadow: 0 0 0 1px #d43a2c; margin: 0 2px 0 4px; }
  .x { margin-left: 4px; color: #555; }
  .newtab { margin: 7px 0 0 10px; }
  .profile { width: 49px; height: 19px; background: #305fb5; color: #fff; margin-left: 17px; text-align: center; font-size: 10px; font-weight: 600; }
  .profile .t { line-height: 18px; }
  .wctl { display: flex; gap: 33px; margin: 7px 0 0 22.5px; }
  .toolbar { height: 36px; display: flex; align-items: center; padding: 0 6px 0 11px; }
  .toolbar > .dim + .dim { margin: 0 13px; }
  .dim { color: #cfcfcf; }
  .omni { flex: none; width: 1174px; height: 28px; margin-left: 10px; background: #fff; border: 1px solid #a8a8a8; border-radius: 3px; display: flex; align-items: center; padding: 0 7px 0 9px; font-size: 13px; color: #111; }
  .secure { color: #0b8043; margin-left: 9.5px; }
  .bar { width: 1px; height: 16px; background: #bbb; margin: 0 8px 0 9px; }
  .omni > :global(.ico) { margin-left: 7px; }
  .picker { margin-left: 11px; }
  .shield { margin-left: 15px; }
  .menu { width: 24px; height: 24px; margin-left: 12px; background: #dfdfdf; border-radius: 2px; display: grid; place-items: center; }
  .marks { display: flex; align-items: center; height: 20px; padding-left: 9.5px; gap: 13px; font-size: 11.700px; color: #222; }
  .mark { display: flex; align-items: center; gap: 5px; }
  .mt.cut { width: 116px; -webkit-mask: linear-gradient(90deg, #000 82%, transparent); mask: linear-gradient(90deg, #000 82%, transparent); }
  .more { margin-left: 82px; font-size: 16px; line-height: 14px; font-weight: 600; color: #555; margin-top: -3px; }

  .meeting { height: 638px; display: flex; position: relative; flex: none; }
  .gutter { width: 76px; }
  .left { background: linear-gradient(172deg, #d0d2d3 0, #c0c4c8 30%, #a4aab3 55%, #868e9a 80%, #7f8795 100%); }
  .right { background: linear-gradient(170deg, #7d8794 0, #8b95a1 25%, #a3a8b2 55%, #b9bdc6 80%, #c3c7ce 100%); }
  .shared { width: 1134px; border-top: 2px solid #cdd0d4; display: flex; flex-direction: column; }
  .istrip { height: 21px; background: #fff; display: flex; padding-left: 4px; box-shadow: inset 0 -1px #c4c3c5; flex: none; }
  .itab { width: 41.400px; position: relative; height: 21px; flex: none; }
  .itab .shape { width: 116%; }
  .itin { position: relative; display: flex; align-items: center; height: 22px; padding-left: 10.500px; gap: 4px; font-size: 8.700px; color: #777; }
  .itin .t { width: 14px; overflow: hidden; letter-spacing: -.1px; -webkit-mask: linear-gradient(90deg, #000 60%, transparent 115%); mask: linear-gradient(90deg, #000 60%, transparent 115%); }
  .ix { margin-left: 3px; color: #333; }
  .inew { margin: 5px 0 0 4px; }
  .joy { width: 25px; height: 13px; margin-left: 12.500px; background: #999a9c; color: #fff; font: 600 8px/13px "Liberation Serif", serif; text-align: center; }
  .iwctl { display: flex; align-items: center; gap: 24.500px; margin: -1px 0 0 17px; }
  .itool { height: 26px; background: #f3f2f4; display: flex; align-items: center; padding: 2px 0 0 8px; flex: none; }
  .itool .dim { margin: 0 10px; }
  .iback { color: #555; }
  .iomni { width: 992px; height: 21px; margin: 0 7.500px 0 7px; background: #fff; border: 1px solid #b2b1b3; display: flex; align-items: center; padding: 0 5px; font-size: 9.700px; color: #111; flex: none; }
  .iomni .t { margin-left: 6px; }
  .ang { margin: 0 14px 0 12px; }
  .imarks { height: 19px; background: #f3f2f4; border-bottom: 1px solid #d0cfd1; display: flex; align-items: center; padding: 0 0 2px 8px; gap: 9.930px; font-size: 8.600px; flex: none; }
  .imark { display: flex; align-items: center; gap: 3.500px; }

  .view { height: 542px; display: flex; flex: none; }
  .site { width: 1122px; background: #fdfdfd; font-size: 11px; color: #333; }
  .topnav { height: 36px; background: #046063; display: flex; align-items: center; padding: 0 151px 2px 151px; color: #fff; }
  .who { display: flex; align-items: center; margin-left: 22px; gap: 2px; }
  .caret { border: 3px solid transparent; border-top-color: currentColor; border-bottom: 0; margin-left: 2px; width: 0; height: 0; }
  .content { height: 468px; padding: 23px 0 0 140px; display: flex; gap: 22px; }
  aside { width: 194px; }
  .card { height: 206px; background: #4f7fb2; color: #fff; display: flex; flex-direction: column; align-items: center; padding: 13px 2px 0 0; border: 1px solid #4575a8; }
  .card .t { line-height: 15px; }
  .card .name { margin-top: 17px; }
  .stats { height: 52px; border: 1px solid #dcdadd; border-top: 0; display: flex; padding: 11px 0; }
  .stats div { flex: 1; display: flex; flex-direction: column; align-items: center; }
  .stats div + div { border-left: 1px solid #c5c3c6; height: 30px; margin-left: -1px; }
  .stats .t { line-height: 15px; }
  .list { margin-top: 22px; border: 1px solid #dedde0; background: #f6f5f7; }
  .list div { height: 30px; padding: 6px 10.500px; }
  .list div:first-child { padding-top: 7px; height: 29px; }
  .list div + div { border-top: 1px solid #dedde0; }
  .form { width: 626px; }
  .steps { display: grid; grid-template-columns: 194.500px 200px 231px; height: 29px; color: #3f77aa; }
  .steps div { display: grid; place-items: center; }
  .steps .on { background: #2980b9; color: #fff; }
  .lab { height: 14px; display: flex; align-items: center; }
  .lab.a { margin-top: 8px; }
  .lab.b { margin: 11px 0 0; }
  .title { height: 26px; border: 1px solid #7fb9de; box-shadow: 0 0 4px #c9e3f4; display: flex; align-items: center; padding-left: 8.500px; color: #555; position: relative; background: #fff; }
  .cursor { width: 1px; height: 14px; background: #222; }
  .beam { position: absolute; left: 54px; top: 6px; }
  .editor { height: 89px; border: 1px solid #bcbabd; background: #fff; }
  .tools { height: 29px; background: #f5f4f6; border-bottom: 1px solid #dddcdf; padding: 3px 0 0 3px; display: flex; gap: 3.200px; }
  .grp { height: 23px; border: 1px solid #d6d4d8; background: #fff; display: flex; align-items: center; color: #333; }
  .grp > b { height: 21px; display: flex; justify-content: center; align-items: center; font: 700 10px "Liberation Serif", serif; flex: 1; }
  .grp > b + b { border-left: 1px solid #d6d4d8; }
  .g1 { width: 161px; }
  .g1 b:nth-child(n+4) { flex: 1.100; font-family: "Open Sans", sans-serif; font-size: 9px; }
  .g1 b.s { text-decoration: line-through; font: 10px "Liberation Serif", serif; }
  .g1 b.u { text-decoration: underline; font-weight: 400; }
  .wide { width: 69px; padding-left: 7px; font-size: 9px; }
  .size { width: 35px; padding-left: 8px; font-size: 9px; }
  .g2 { width: 46px; }
  .g3 { width: 81px; }
  .g3 b:last-child { flex: 1.350; }
  .g4 { width: 32px; }
  .g5 { width: 25px; }
  mark { background: #fdf500; padding: 0 2px; line-height: 11px; }
  .area { height: 53px; padding: 7.500px 7px; }
  .grip { height: 5px; background: #f5f4f6; display: grid; place-items: center; }
  .grip i { width: 15px; height: 3px; background: #d4d2d6; }
  .row { display: flex; align-items: center; height: 16px; }
  .rl { width: 162px; flex: none; }
  .r1 { margin-top: 25px; }
  .r2 { margin-top: 17px; }
  .r3 { margin-top: 17px; }
  .r4 { margin-top: 13px; height: 25px; }
  .r5, .btns { margin-top: 11px; height: 25px; }
  .hint { height: 16px; color: #777; display: flex; }
  .radio { width: 9px; height: 9px; border: 1px solid #b0aeb1; border-radius: 50%; background: #eceaed; margin-top: 2px; }
  .radio.on { background: radial-gradient(#444 0 2px, #ebe9ec 2.700px); }
  .row .yes { margin: 1px 10px 0 5.500px; }
  .row .no { margin: 1px 0 0 6px; }
  .check { width: 9px; height: 9px; border: 1px solid #aeacaf; background: #eeedef; border-radius: 1px; display: grid; place-items: center; margin-right: 3px; margin-top: -1px; }
  .check + .t { margin-top: 2px; }
  .second { margin-left: 11px; }
  .num { width: 86px; height: 25px; border: 1px solid #d9d7da; background: #fff; padding: 7px 9px; margin-right: 21.500px; color: #444; }
  .btns { display: flex; justify-content: flex-end; color: #fff; }
  .btns div { display: grid; place-items: center; }
  .prev { width: 60px; background: #74acd1; }
  .next { width: 41.500px; background: #2980b9; }
  footer { height: 38px; background: #f5f4f6; display: flex; align-items: center; padding-left: 795.500px; position: relative; color: #777; }
  footer svg { margin: 0 3px 0 8px; }
  .brand { color: #2f7fb3; font-size: 13.500px; margin-top: 1px; }
  .popup { position: absolute; left: 338px; bottom: 0; width: 459px; height: 5px; border: 1px solid #cfced1; border-bottom: 0; border-radius: 2px 2px 0 0; background: #fbfafc; }
  .scroll { width: 12px; background: #f2f1f3; border-right: 1px solid #fff; display: flex; flex-direction: column; align-items: center; }
  .arrow { border: 3px solid transparent; border-bottom-color: #555; border-top: 0; margin-top: 6px; }
  .thumb { width: 10px; height: 488px; background: #c2c0c3; margin-top: 33px; }

  .itask { flex: 1; background: #0e0d11; border-top: 1px solid #55555a; display: flex; align-items: center; color: #f2f2f2; font-size: 9px; }
  .cell { width: 36.500px; display: grid; place-items: center; }
  .cell:nth-child(2), .cell:nth-child(3) { padding-right: 3px; }
  .cell:nth-child(4) { padding-right: 4px; }
  .task { width: 118px; height: 27px; display: flex; align-items: center; padding-left: 8px; gap: 3px; }
  .task.cur { background: #333338; }
  .task.set { padding-left: 9.500px; }
  .itray { width: 174px; display: flex; align-items: center; gap: 5.500px; }

  .panel { width: 80px; background: #485164; display: flex; flex-direction: column; align-items: center; }
  .exit { width: 80px; height: 45px; background: #d9dde0; display: flex; flex-direction: column; align-items: center; padding-top: 8px; color: #e0695f; font-size: 12px; flex: none; }
  .exit .t { margin-top: 0; }
  .round { width: 46px; height: 46px; border-radius: 50%; display: grid; place-items: center; flex: none; }
  .mic { margin-top: 28px; background: #05b27c; border: 1px solid #90d69e; box-shadow: 0 0 16px #12a47b; }
  .mon { margin-top: 16px; background: #596275; border: 1px solid #707a89; }
  hr { width: 68px; margin: 18px 0 0; border: 0; border-top: 1px solid #a0a5af; flex: none; }
  .people { display: flex; margin: 18px 0 0 10px; color: #8698bd; height: 19px; }
  .people svg { margin-top: 1px; }
  .count { font-size: 14px; font-weight: 600; line-height: 14px; width: 8px; margin-top: -5px; }
  .chat { margin-top: 35px; height: 21px; }
  .cog { margin-top: 34px; color: #8698bd; }
  .bars { margin-bottom: 24px; }
  .more3 { margin-bottom: 22px; }
  .talk { position: absolute; left: 1116px; top: 603px; width: 170px; height: 35px; background: #485164; border-right: 1px solid #ccd0d6; color: #fff; font-size: 13px; display: flex; align-items: center; padding-left: 14px; gap: 6px; }
  .talk i { width: 6px; height: 35px; background: repeating-linear-gradient(#485164 0 2px, #8991a0 2px 3px); }
  .mark-os { position: absolute; left: 1073px; top: 560px; color: rgba(150, 150, 150, .65); }
  .w1 { font-size: 18.500px; height: 24px; }
  .w1 .t { line-height: 24px; }
  .w2 { font-size: 13.500px; height: 20px; }
  .w2 .t { line-height: 20px; }

  .taskbar { height: 40px; background: linear-gradient(90deg, #0c0b09, #17120d 35%, #17130e 57%, #030303 59%, #171717 66%, #0b0b0b 78%, #15110d); display: flex; align-items: center; color: #fff; }
  .start { width: 48px; display: grid; place-items: center; }
  .search { width: 344px; height: 40px; background: #333; display: flex; align-items: center; padding: 0 15px 0 9px; font-size: 14px; color: #a9a9a9; }
  .search .t { margin: 1px 0 0 5px; }
  .tv { width: 50px; padding-left: 13px; }
  .launch { width: 49px; height: 40px; display: grid; place-items: center; position: relative; background: linear-gradient(#76b9ed, #76b9ed) center bottom / 0 2px no-repeat; }
  .launch.open { background-size: 40px 2px; }
  .launch.active { background-color: #45433f; background-size: 49px 2px; }
  .tray { display: flex; align-items: center; gap: 8.500px; }
  .clock { width: 70px; display: flex; flex-direction: column; align-items: center; font-size: 11.500px; gap: 2px; margin: -1px 1px 0 -2px; }
  .notif { margin-left: 8px; }
  .edge { width: 1px; height: 40px; background: #555; margin: 0 4px 0 18px; }
</style>
